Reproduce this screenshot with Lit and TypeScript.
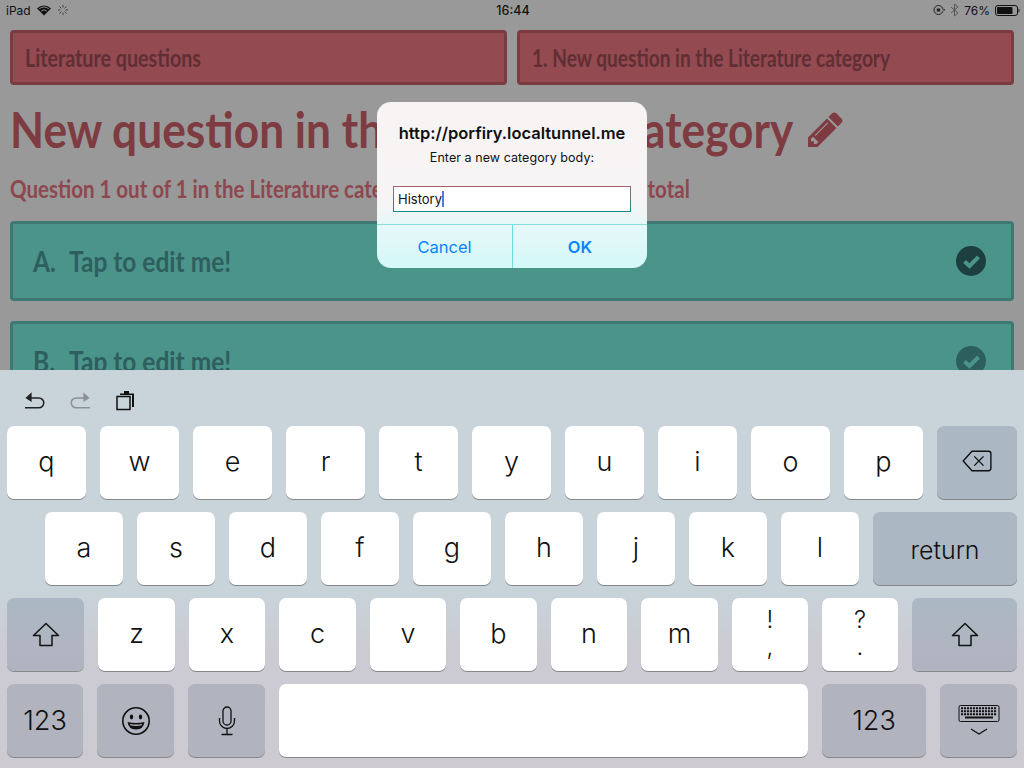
import { LitElement, html, css, svg } from "lit";
import { customElement } from "lit/decorators.js";

type Key = { w: number; t?: string; alt?: string; dark?: boolean; icon?: string; cls?: string };

const k = (w: number, t: string): Key => ({ w, t });
const ROWS: Key[][] = [
  [..."qwertyuiop"].map((c) => k(79, c)).concat([{ w: 80, dark: true, icon: "back" }]),
  [..."asdfghjkl"].map((c) => k(78, c)).concat([{ w: 144, t: "return", dark: true, cls: "ret" }]),
  [
    { w: 77, dark: true, icon: "shift" },
    k(77, "z"), k(76, "x"), k(77, "c"), k(76, "v"), k(77, "b"), k(76, "n"), k(77, "m"),
    { w: 76, t: "!", alt: "," },
    { w: 76, t: "?", alt: "." },
    { w: 105, dark: true, icon: "shift" },
  ],
  [
    { w: 76, t: "123", dark: true },
    { w: 77, dark: true, icon: "emoji" },
    { w: 77, dark: true, icon: "mic" },
    { w: 529 },
    { w: 104, t: "123", dark: true },
    { w: 77, dark: true, icon: "kb" },
  ],
];

const ICONS: Record<string, unknown> = {
  back: svg`<svg width="33" height="24" viewBox="0 0 34 26" fill="none" stroke="#111" stroke-width="1.5"><path d="M11 2.5h18a2.5 2.5 0 0 1 2.5 2.5v16a2.5 2.5 0 0 1-2.5 2.5H11L1.5 13z" stroke-linejoin="round"/><path d="M13.5 8l10 10M23.5 8l-10 10"/></svg>`,
  shift: svg`<svg width="28" height="25" viewBox="0 0 28 25" fill="none" stroke="#111" stroke-width="1.5" stroke-linejoin="round"><path d="M14 1.5L1.5 13.5H8V23.5H20V13.5H26.5z"/></svg>`,
  emoji: svg`<svg width="30" height="30" viewBox="0 0 30 30" fill="none" stroke="#111" stroke-width="1.6"><circle cx="15" cy="15" r="13.2"/><ellipse cx="10.5" cy="11" rx="1.7" ry="2.4" fill="#111" stroke="none"/><ellipse cx="19.5" cy="11" rx="1.7" ry="2.4" fill="#111" stroke="none"/><path d="M6.5 16q8.500 2 17 0q-1 7.500-8.500 7.500T6.500 16z" fill="#111" stroke="none"/><path d="M9 18q6 1.200 12 0l-.6 1.600q-5.400.8-10.800 0z" fill="#b1b3bf" stroke="none"/></svg>`,
  mic: svg`<svg width="18" height="30" viewBox="0 0 18 30" fill="none" stroke="#111" stroke-width="1.3"><rect x="5" y="1" width="8" height="18" rx="4"/><path d="M1.500 12v3a7.500 7.500 0 0 0 15 0v-3M9 22.500V28.500M3.500 28.500h11"/></svg>`,
  kb: svg`<svg width="42" height="32" viewBox="0 0 42 32"><rect x="1" y=".5" width="40" height="16" rx="1.500" fill="none" stroke="#111"/><path d="M3 3.200h36M3 6.200h36M3 9.200h36" stroke="#111" stroke-width="2" stroke-dasharray="2.100 .9"/><path d="M7 12.500h28" stroke="#111" stroke-width="2"/><path d="M13 24l8 5 8-5" fill="none" stroke="#111" stroke-width="1.300"/></svg>`,
};

@customElement("app-root")
export class AppRoot extends LitElement {
  static styles = css`
    :host { display: block; width: 1024px; height: 768px; overflow: hidden; position: relative; font-family: "Inter", "Liberation Sans", sans-serif; }
    .page { height: 370px; background: #999; overflow: hidden; box-sizing: border-box; }
    .status { height: 20px; padding: 0 4px 0 6px; display: grid; grid-template-columns: 1fr auto 1fr; align-items: center; font-size: 12px; color: #111; font-family: "Inter", sans-serif; }
    .status .l, .status .r { display: flex; align-items: center; }
    .status .l { gap: 6px; }
    .status .r { justify-content: flex-end; gap: 5px; }
    .status .time { font-weight: 500; font-size: 12.500px; }
    .content { padding: 10px 10px 0; font-family: "Lato", sans-serif; font-weight: 700; }
    .sx { display: inline-block; transform-origin: left center; white-space: nowrap; }
    .crumbs { display: grid; grid-template-columns: 1fr 1fr; gap: 10px; }
    .crumb { height: 55px; box-sizing: border-box; border: 3px solid #7a3b42; border-radius: 4px; background: #934a50; color: #5f2f35; font-size: 24px; display: flex; align-items: center; padding-left: 12px; overflow: hidden; }
    .crumb .sx { transform: scaleX(.82); }
    .crumb.long .sx { transform: scaleX(.795); }
    h1 { margin: 14px 0 0; height: 60px; font-size: 50px; line-height: 60px; font-weight: 700; color: #7e3c42; display: flex; align-items: center; gap: 15px; white-space: nowrap; }
    h1 .box { width: 783px; flex: none; }
    h1 .sx { transform: scaleX(.885); }
    h2 { margin: 14px 0 0; font-size: 25px; line-height: 30px; font-weight: 700; color: #8e474e; white-space: nowrap; }
    h2 .sx { display: inline-flex; justify-content: space-between; width: 829px; transform: scaleX(.82); }
    .answer { margin-top: 18px; height: 80px; box-sizing: border-box; border: 3px solid #3e7873; border-radius: 4px; background: #4b948a; color: #2e5f5e; font-size: 28.500px; display: flex; align-items: center; padding: 0 25px 0 20px; }
    .answer + .answer { margin-top: 20px; }
    .answer .mark { width: 36px; flex: none; }
    .answer .txt { flex: 1; }
    .answer .sx { transform: scaleX(.86); }
    .dialog { position: absolute; left: 377px; top: 102px; width: 270px; height: 166px; border-radius: 14px; background: linear-gradient(#f8f4f4 0, #f7f4f5 60%, #e4f8f8 76%, #d5f8f9 100%); display: flex; flex-direction: column; overflow: hidden; color: #111; }
    .dialog .title { margin-top: 21px; text-align: center; font-size: 16.500px; line-height: 20px; font-weight: 600; }
    .dialog .msg { margin-top: 7px; text-align: center; font-size: 12.500px; letter-spacing: .06px; line-height: 16px; }
    .dialog .input { margin: 20px 16px 0; height: 26px; box-sizing: border-box; background: #fff; border: 1px solid transparent; border-image: linear-gradient(#a5656c, #0d8f88) 1; font-size: 13px; padding-left: 4px; display: flex; align-items: center; }
    .caret { width: 1.500px; height: 16px; background: #5a78e0; }
    .dialog .btns { margin-top: 12px; flex: 1; display: grid; grid-template-columns: 135px 135px; border-top: 1px solid #89dcdc; }
    .btn { display: flex; align-items: center; justify-content: center; color: #0a84ff; font-size: 16.500px; }
    .btn.ok { font-weight: 600; border-left: 1px solid #6fdde0; }
    .kbd { height: 398px; background: linear-gradient(#c8d3da 0, #c8d3da 55%, #cccbd3 70%, #cdcad1 100%); display: flex; flex-direction: column; }
    .tools { height: 56px; display: flex; align-items: center; padding: 4px 0 0 24px; gap: 25px; box-sizing: border-box; }
    .rows { display: flex; flex-direction: column; gap: 13px; }
    .row { display: flex; gap: 14px; padding-left: 7px; height: 73px; }
    .row.home { padding-left: 45px; }
    .key { height: 73px; border-radius: 7px; background: #fff; box-shadow: 0 1px 0 #85878b; display: flex; flex-direction: column; align-items: center; justify-content: center; font-size: 27px; font-weight: 300; color: #111; box-sizing: border-box; padding-bottom: 3px; }
    .key.dark { background: #abb8c3; }
    .row.r2 .key.dark { background: linear-gradient(#abb8c3, #b1b3bf); padding-bottom: 0; }
    .row.r3 .key.dark { background: #b1b3bf; padding-bottom: 0; }
    .key.ret { font-size: 25px; padding: 3px 0 0; }
    .key .stack { font-size: 24px; line-height: 27px; }
  `;

  private renderKey(key: Key) {
    const cls = `key ${key.dark ? "dark" : ""} ${key.cls ?? ""}`;
    return html`<div class=${cls} style="width:${key.w}px">
      ${key.icon ? ICONS[key.icon] : ""}
      ${key.alt
        ? html`<span class="stack">${key.t}</span><span class="stack">${key.alt}</span>`
        : key.t ?? ""}
    </div>`;
  }

  private answer(letter: string, bg: string) {
    return html`<div class="answer">
      <span class="mark"><span class="sx">${letter}.</span></span>
      <span class="txt"><span class="sx">Tap to edit me!</span></span>
      <svg width="30" height="30" viewBox="0 0 30 30">
        <circle cx="15" cy="15" r="15" fill=${bg} />
        <path d="M8.500 15.500l5 4.500 9-9" fill="none" stroke="#4b948a" stroke-width="4" />
      </svg>
    </div>`;
  }

  render() {
    return html`
      <div class="page">
        <div class="status">
          <div class="l">
            <span>iPad</span>
            <svg width="14" height="11" viewBox="0 0 14 11"><path d="M7 10.500L0 3.400a10 10 0 0 1 14 0z" fill="#111"/><path d="M2.200 3.900a7 7 0 0 1 9.600 0M4.200 6a4.200 4.200 0 0 1 5.600 0" fill="none" stroke="#999" stroke-width=".9"/></svg>
            <svg width="12" height="12" viewBox="0 0 12 12" stroke="#444" stroke-width="1"><path d="M6 1v2.500M6 8.500V11M1 6h2.500M8.500 6H11M2.500 2.500l1.800 1.800M7.700 7.700l1.800 1.800M2.500 9.500l1.800-1.800M7.700 4.300l1.800-1.800"/></svg>
          </div>
          <div class="time">16:44</div>
          <div class="r">
            <svg width="12" height="12" viewBox="0 0 12 12" fill="none" stroke="#222"><circle cx="5.500" cy="6" r="4.500"/><rect x="3.800" y="4.500" width="3.400" height="3" fill="#222" stroke="none"/><path d="M9 6h3" stroke="#999" stroke-width="2"/><path d="M9.500 5l1.500 1.500L12 5" stroke="#222"/></svg>
            <svg width="9" height="14" viewBox="0 0 9 14" fill="none" stroke="#555" stroke-width="1"><path d="M1 4l7 6-3.500 3V1L8 4 1 10"/></svg>
            <span>76%</span>
            <svg width="25" height="11" viewBox="0 0 25 11"><rect x=".5" y=".5" width="22" height="10" rx="2.500" fill="none" stroke="#111"/><rect x="2" y="2" width="15.500" height="7" rx="1" fill="#111"/><path d="M23.500 3.500v4a2 2 0 0 0 1-2 2 2 0 0 0-1-2z" fill="#111"/></svg>
          </div>
        </div>
        <div class="content">
          <div class="crumbs">
            <div class="crumb"><span class="sx">Literature questions</span></div>
            <div class="crumb long"><span class="sx">1. New question in the Literature category</span></div>
          </div>
          <h1>
            <span class="box"><span class="sx">New question in the Literature category</span></span>
            <svg width="35" height="35" viewBox="0 0 1536 1536" fill="#7e3c42"><path d="M363 1408l91-91-235-235-91 91v107h128v128h107zm523-928q0-22-22-22-10 0-17 7L305 1007q-7 7-7 17 0 22 22 22 10 0 17-7l542-542q7-7 7-17zm-54-192l416 416-832 832H0v-416zm683 96q0 53-37 90l-166 166-416-416 166-165q36-38 90-38 53 0 91 38l235 234q37 39 37 91z"/></svg>
          </h1>
          <h2><span class="sx"><span>Question 1 out of 1 in the Literature category, 1 question in</span><span>total</span></span></h2>
          ${this.answer("A", "#1d3f3f")}
          ${this.answer("B", "#2d5f5c")}
        </div>
      </div>
      <div class="kbd">
        <div class="tools">
          <svg width="21" height="20" viewBox="0 0 22 20" fill="none" stroke="#222" stroke-width="1.600"><path d="M1 18.200h14.500a5.200 5.200 0 0 0 0-10.400H4"/><path d="M8 2L1.500 7.800 8 12z" fill="#222" stroke="none"/></svg>
          <svg width="21" height="20" viewBox="0 0 22 20" fill="none" stroke="#8b9196" stroke-width="1.600"><path d="M21 18.200H6.500a5.200 5.200 0 0 1 0-10.400H18"/><path d="M14 2l6.500 5.800L14 12z" fill="#8b9196" stroke="none"/></svg>
          <svg width="20" height="21" viewBox="0 0 20 21"><rect x="1" y="6.500" width="13" height="13" fill="none" stroke="#111" stroke-width="1.500"/><path d="M4 5V3.500h4V1h5v2.500h5V17h-2V5z" fill="#111"/></svg>
        </div>
        <div class="rows">
          ${ROWS.map(
            (row, i) => html`<div class="row ${i === 1 ? "home" : ""} r${i}">
              ${row.map((key) => this.renderKey(key))}
            </div>`
          )}
        </div>
      </div>
      <div class="dialog">
        <div class="title">http://porfiry.localtunnel.me</div>
        <div class="msg">Enter a new category body:</div>
        <div class="input"><span>History</span><span class="caret"></span></div>
        <div class="btns">
          <div class="btn">Cancel</div>
          <div class="btn ok">OK</div>
        </div>
      </div>
    `;
  }
}
